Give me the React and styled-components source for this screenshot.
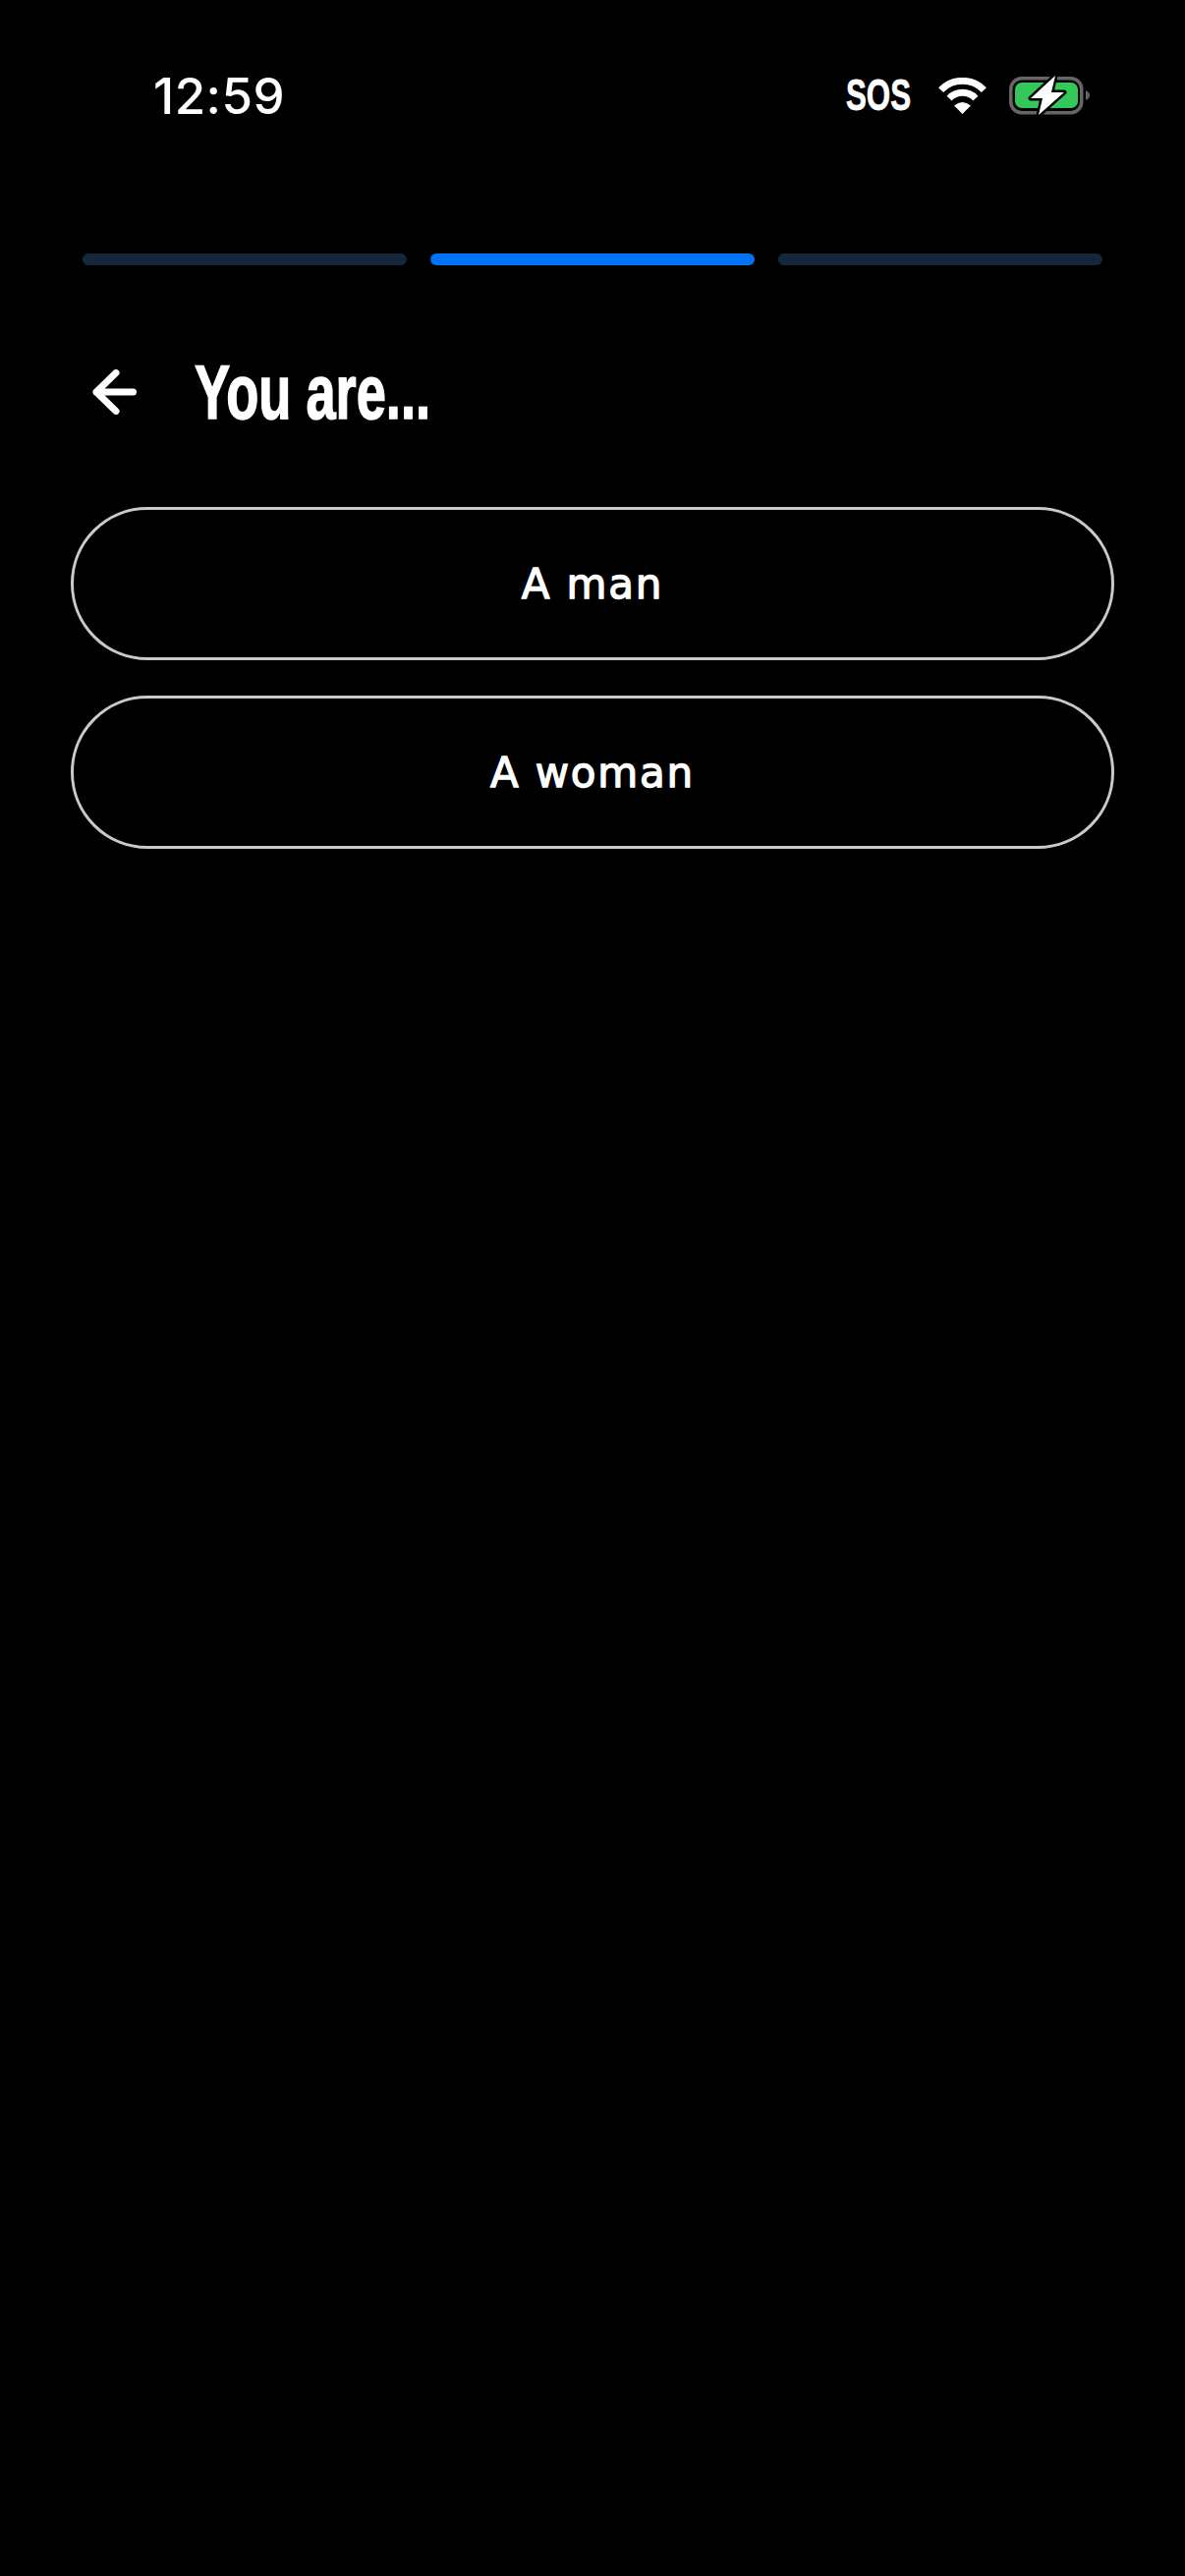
import React from 'react';
import styled, { createGlobalStyle } from 'styled-components';

const GlobalStyle = createGlobalStyle`
  html, body {
    margin: 0;
    padding: 0;
    background: #000;
  }
`;

const options = ['A man', 'A woman'];
const steps = [false, true, false];

const App = () => {
  return (
    <Screen>
      <GlobalStyle />
      <StatusBar>
        <Clock>12:59</Clock>
        <StatusIcons>
          <Sos>SOS</Sos>
          <svg width="51" height="37" viewBox="0 0 51 37" fill="none">
            <path d="M3.6 12.6A30.5 30.5 0 0 1 47.4 12.6" stroke="#fff" strokeWidth="7" />
            <path d="M12.1 21.1A18.5 18.5 0 0 1 38.9 21.1" stroke="#fff" strokeWidth="7" />
            <path d="M25.5 37L17 28.5Q25.5 21.5 34 28.5Z" fill="#fff" />
          </svg>
          <svg width="82" height="42" viewBox="0 0 82 42" fill="none">
            <rect x="1.75" y="3.75" width="72" height="35" rx="11" stroke="#666" strokeWidth="3.5" />
            <rect x="6" y="8" width="64" height="26" rx="7" fill="#34c759" />
            <path d="M78 16C80.5 17 82 19 82 21C82 23 80.5 25 78 26Z" fill="#666" />
            <path
              d="M47 1L22 24H34L30 41L56 18H43Z"
              fill="#fff"
              stroke="#000"
              strokeWidth="5"
              strokeLinejoin="round"
              paintOrder="stroke"
            />
          </svg>
        </StatusIcons>
      </StatusBar>

      <Progress>
        {steps.map((active, i) => (
          <Step key={i} $active={active} />
        ))}
      </Progress>

      <Header>
        <svg width="45" height="46" viewBox="0 0 45 46" fill="none">
          <path
            d="M41.5 23H4M24 3.5L4 23L24 42.5"
            stroke="#fff"
            strokeWidth="7"
            strokeLinecap="round"
            strokeLinejoin="round"
          />
        </svg>
        <Title>You are...</Title>
      </Header>

      <Options>
        {options.map((label) => (
          <Option key={label}>{label}</Option>
        ))}
      </Options>
    </Screen>
  );
};

const Screen = styled.div`
  width: 1206px;
  height: 2622px;
  background: #000;
  overflow: hidden;
`;

const StatusBar = styled.div`
  height: 194px;
  box-sizing: border-box;
  padding: 0 97px 0 156px;
  display: flex;
  align-items: center;
  justify-content: space-between;
`;

const Clock = styled.span`
  font-family: Inter, 'Liberation Sans', sans-serif;
  font-size: 51px;
  font-weight: 500;
  letter-spacing: 0.5px;
  color: #fff;
`;

const StatusIcons = styled.div`
  display: flex;
  align-items: center;
  gap: 22px;
`;

const Sos = styled.span`
  width: 71px;
  font-family: 'Liberation Sans', Arial, sans-serif;
  font-size: 44px;
  font-weight: 700;
  color: #fff;
  -webkit-text-stroke: 0.8px #fff;
  transform: scaleX(0.71);
  transform-origin: left center;
  white-space: nowrap;
`;

const Progress = styled.div`
  margin-top: 64px;
  padding: 0 84px;
  display: flex;
  gap: 24px;
`;

const Step = styled.div`
  width: 330px;
  height: 12px;
  border-radius: 6px;
  background: ${(props) => (props.$active ? '#0072f5' : '#15273a')};
`;

const Header = styled.div`
  margin-top: 69px;
  height: 120px;
  padding-left: 94px;
  display: flex;
  align-items: center;
  gap: 59px;
`;

const Title = styled.h1`
  margin: 0;
  font-family: 'Liberation Sans', Arial, sans-serif;
  font-size: 78px;
  font-weight: 700;
  color: #fff;
  -webkit-text-stroke: 1.5px #fff;
  white-space: nowrap;
  transform: scaleX(0.695);
  transform-origin: left center;
`;

const Options = styled.div`
  margin-top: 57px;
  padding: 0 72px;
  display: flex;
  flex-direction: column;
  gap: 36px;
`;

const Option = styled.button`
  height: 156px;
  box-sizing: border-box;
  border: 3px solid #c8cbcc;
  border-radius: 78px;
  background: transparent;
  color: #fff;
  font-family: 'DejaVu Sans', 'Liberation Sans', sans-serif;
  font-size: 42px;
  font-weight: 400;
  letter-spacing: 1.8px;
  -webkit-text-stroke: 1.3px #fff;
`;

export default App;
